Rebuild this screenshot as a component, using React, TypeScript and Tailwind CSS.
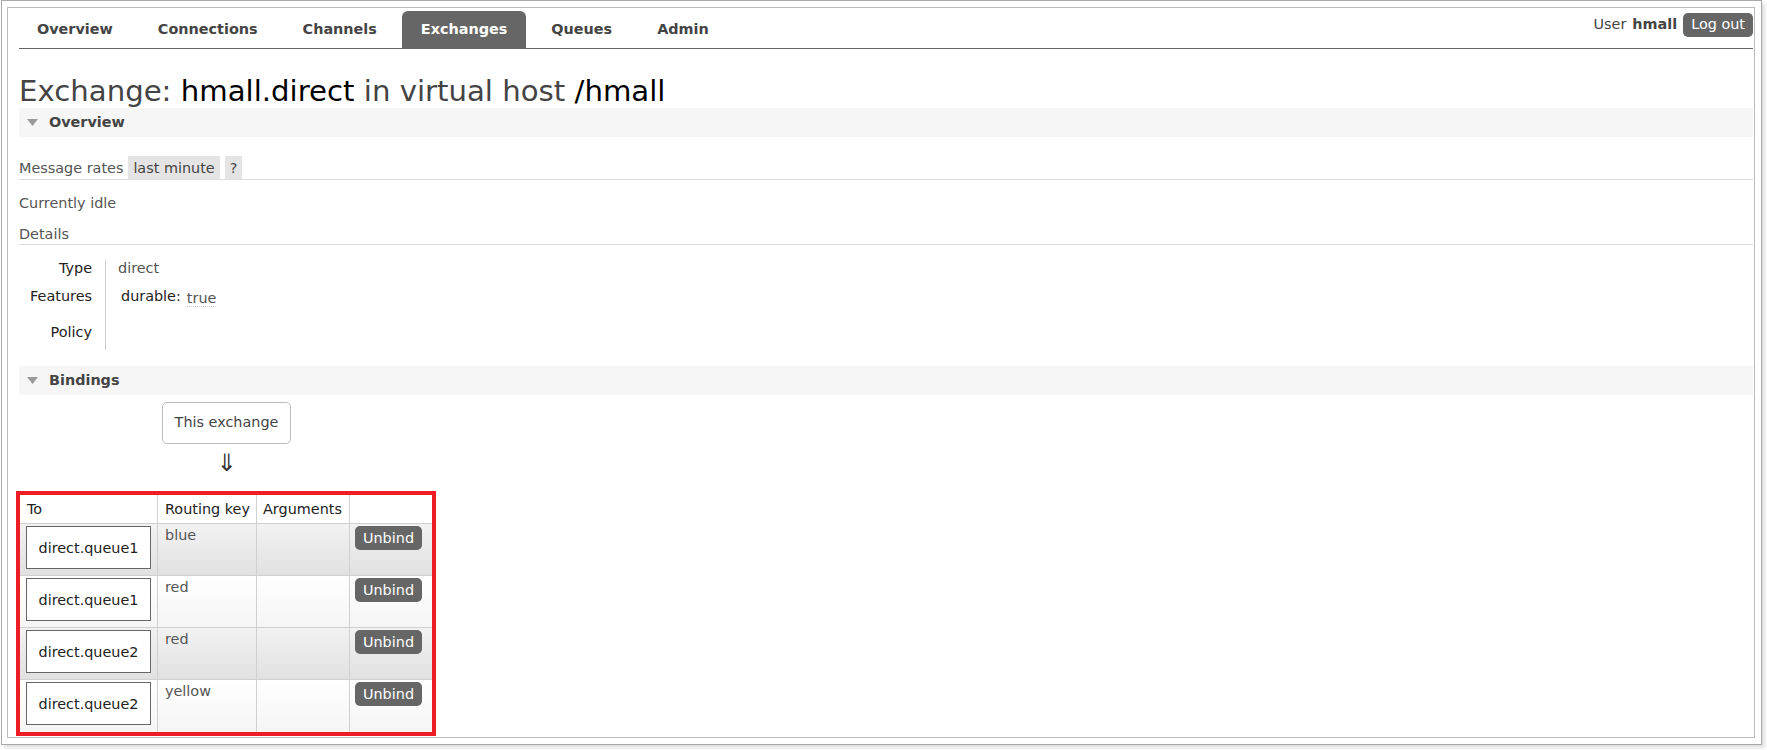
import React from 'react';

const TABS = ['Overview', 'Connections', 'Channels', 'Exchanges', 'Queues', 'Admin'];

const BINDINGS = [
  { to: 'direct.queue1', key: 'blue' },
  { to: 'direct.queue1', key: 'red' },
  { to: 'direct.queue2', key: 'red' },
  { to: 'direct.queue2', key: 'yellow' },
];

function SectionHeader({ title }: { title: string }) {
  return (
    <div className="flex h-[29px] items-center bg-[#f6f6f6] pl-[8px]">
      <svg width="11" height="7" viewBox="0 0 11 7">
        <polygon points="0,0 11,0 5.5,7" fill="#9a9a9a" />
      </svg>
      <span className="ml-[11px] text-[14.4px] font-bold text-[#444]">{title}</span>
    </div>
  );
}

function NavBar() {
  return (
    <div className="flex h-[38px] border-b border-[#666]">
      <ul className="-ml-[2px] flex items-end gap-[5px]">
        {TABS.map((tab) => (
          <li
            key={tab}
            className={
              tab === 'Exchanges'
                ? 'flex h-[37px] items-center rounded-t-[6px] bg-[#666] px-[19px] text-[14.4px] font-bold text-white'
                : 'flex h-[37px] items-center px-[20px] text-[14.4px] font-bold text-[#444]'
            }
          >
            {tab}
          </li>
        ))}
      </ul>
      <div className="mt-[2px] ml-auto flex h-[24px] items-center self-start text-[14.4px] text-[#444]">
        <span>User</span>
        <b className="ml-[6px]">hmall</b>
        <button className="ml-[6px] flex h-[24px] items-center rounded-[5px] bg-[#666] px-[8px] text-white">
          Log out
        </button>
      </div>
    </div>
  );
}

function Details() {
  return (
    <div className="mt-[15px] flex text-[14.4px] leading-[16px]">
      <div className="w-[86px] pr-[13px] text-right text-[#222]">
        <div className="h-[28px]">Type</div>
        <div className="h-[30px]">Features</div>
        <div className="h-[32px] pt-[6px]">Policy</div>
      </div>
      <div className="border-l border-[#ccc] pl-[12px] text-[#555]">
        <div className="h-[28px]">direct</div>
        <div className="flex h-[30px] items-start pl-[3px]">
          <span className="text-[#222]">durable:</span>
          <span className="mt-[3px] ml-[6px] border-b border-dotted border-[#ccc] leading-[15px]">true</span>
        </div>
        <div className="h-[32px]" />
      </div>
    </div>
  );
}

function BindingsTable() {
  return (
    <div className="-ml-[3px] w-[420px] border-4 border-[#ee1c25] text-[14.4px] leading-[16px]">
      <div className="grid h-[29px] grid-cols-[138px_99px_93px_82px] border-b border-[#d0d0d0] bg-white text-[#222]">
        <div className="flex items-center border-r border-[#d0d0d0] pl-[7px]">To</div>
        <div className="flex items-center border-r border-[#d0d0d0] pl-[7px]">Routing key</div>
        <div className="flex items-center border-r border-[#d0d0d0] pl-[6px]">Arguments</div>
        <div />
      </div>
      {BINDINGS.map((b, i) => (
        <div
          key={i}
          className={
            (i % 2 === 0
              ? 'bg-gradient-to-b from-[#f2f2f2] to-[#e1e1e1] '
              : 'bg-gradient-to-b from-[#ffffff] to-[#f5f5f5] ') +
            (i < BINDINGS.length - 1 ? 'border-b border-[#d0d0d0] ' : '') +
            'grid h-[52px] grid-cols-[138px_99px_93px_82px]'
          }
        >
          <div className="border-r border-[#d0d0d0] pt-[2px] pl-[6px]">
            <div className="flex h-[43px] w-[125px] items-center justify-center border border-[#666] bg-white text-[#222]">
              {b.to}
            </div>
          </div>
          <div className="border-r border-[#d0d0d0] pt-[3px] pl-[7px] text-[#555]">{b.key}</div>
          <div className="border-r border-[#d0d0d0]" />
          <div className="pt-[2px] pl-[5px]">
            <button className="flex h-[24px] w-[67px] items-center justify-center rounded-[5px] bg-[#666] text-white">
              Unbind
            </button>
          </div>
        </div>
      ))}
    </div>
  );
}

export default function App() {
  return (
    <div className="h-[750px] w-[1767px] bg-white font-['DejaVu_Sans',Verdana,sans-serif]">
      <div className="ml-[1px] h-[745px] w-[1761px] border border-[#a8a8a8] bg-white pt-[6px] pr-[6px] pb-[6px] pl-[5px] shadow-[3px_3px_4px_rgba(0,0,0,0.13)]">
        <div className="h-full border border-[#bbb] pt-[3px] pr-[1px] pl-[11px]">
          <NavBar />

          <h1 className="mt-[25px] h-[34px] text-[29.2px] leading-[34px] font-normal text-[#444]">
            Exchange: <span className="text-black">hmall.direct</span> in virtual host{' '}
            <span className="text-black">/hmall</span>
          </h1>

          <SectionHeader title="Overview" />

          <div className="mt-[19px] flex h-[24px] items-stretch gap-[5px] border-b border-[#ddd] text-[14.4px] leading-[16px] text-[#555]">
            <span className="flex items-center">Message rates</span>
            <span className="flex items-center bg-[#e4e4e4] px-[5px] text-[#444]">last minute</span>
            <span className="flex items-center bg-[#e4e4e4] px-[5px] text-[#444]">?</span>
          </div>

          <div className="mt-[13px] text-[14.4px] leading-[20px] text-[#555]">Currently idle</div>
          <div className="mt-[11px] h-[21px] border-b border-[#ddd] text-[14.4px] leading-[20px] text-[#555]">
            Details
          </div>

          <Details />

          <div className="mt-[16px]">
            <SectionHeader title="Bindings" />
          </div>

          <div className="mt-[7px] ml-[143px] w-[129px]">
            <div className="flex h-[42px] items-center justify-center rounded-[5px] border border-[#bbb] text-[14.4px] text-[#444]">
              This exchange
            </div>
            <div className="h-[47px] pt-[4px] text-center text-[24px] leading-[30px] text-[#333]">⇓</div>
          </div>

          <BindingsTable />
        </div>
      </div>
    </div>
  );
}
